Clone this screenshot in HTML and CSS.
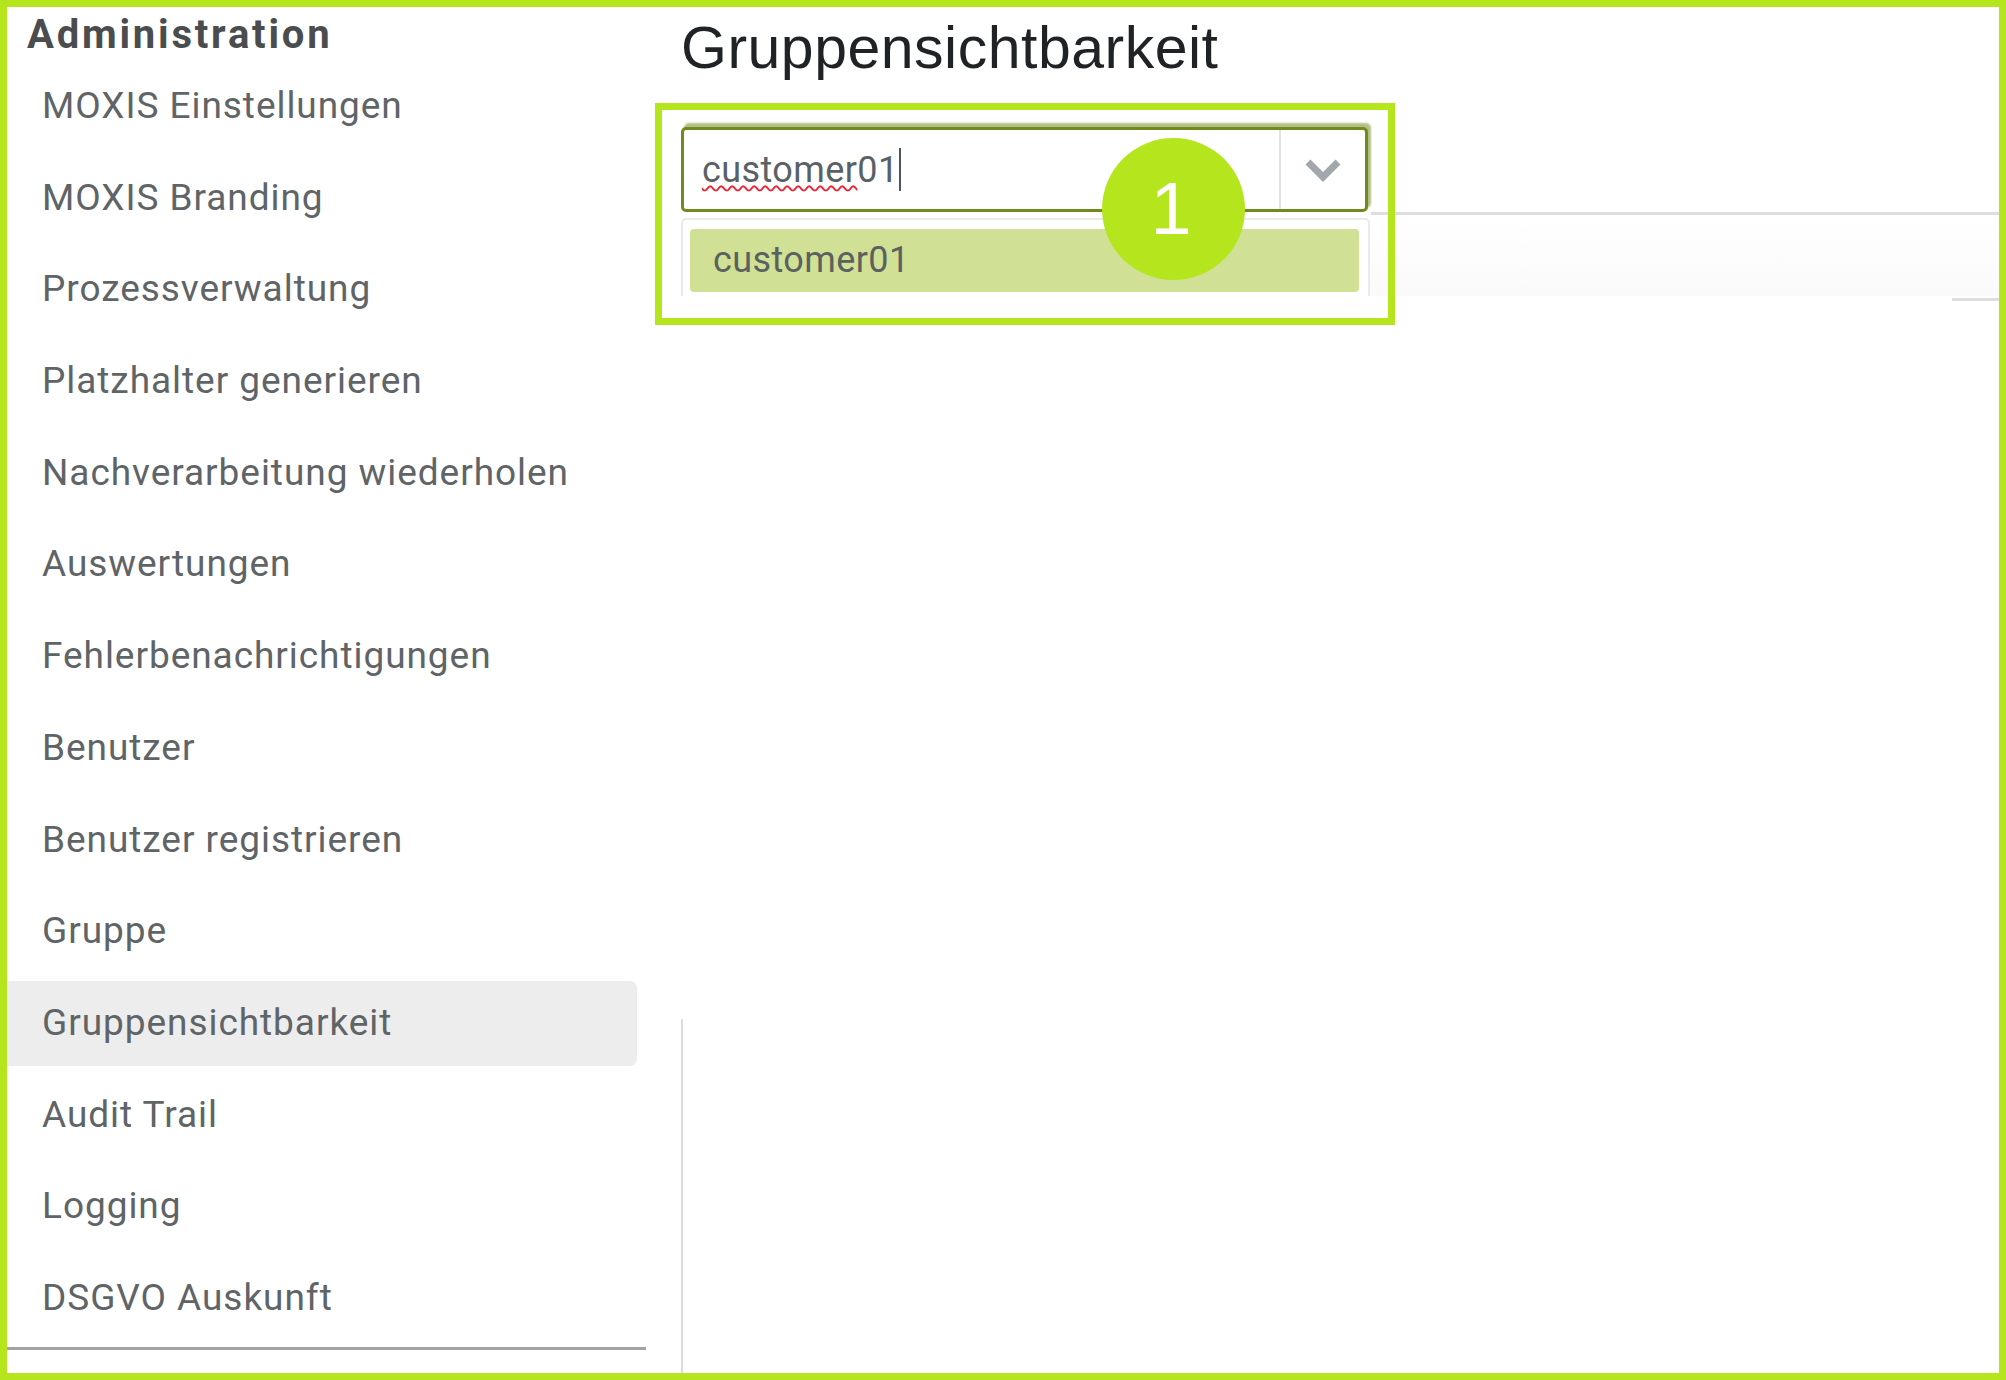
FILE: index.html
```html
<!DOCTYPE html>
<html lang="de">
<head>
  <meta charset="UTF-8">
  <title>Gruppensichtbarkeit</title>
  <link rel="stylesheet" href="styles.css">
</head>
<body>
  <div class="page">

    <!-- Seitenleiste -->
    <aside class="sidebar">
      <h2>Administration</h2>
      <nav class="side-nav">
        <a href="#">MOXIS Einstellungen</a>
        <a href="#">MOXIS Branding</a>
        <a href="#">Prozessverwaltung</a>
        <a href="#">Platzhalter generieren</a>
        <a href="#">Nachverarbeitung wiederholen</a>
        <a href="#">Auswertungen</a>
        <a href="#">Fehlerbenachrichtigungen</a>
        <a href="#">Benutzer</a>
        <a href="#">Benutzer registrieren</a>
        <a href="#">Gruppe</a>
        <a href="#" class="active">Gruppensichtbarkeit</a>
        <a href="#">Audit Trail</a>
        <a href="#">Logging</a>
        <a href="#">DSGVO Auskunft</a>
      </nav>
      <div class="side-rule"></div>
    </aside>

    <!-- Inhalt -->
    <main class="content">
      <h1>Gruppensichtbarkeit</h1>

      <div class="select-row">
        <div class="select-box">
          <div class="select-value"><span class="typo">customer</span>01<span class="caret"></span></div>
          <div class="select-arrow">
            <svg width="36" height="24" viewBox="0 0 36 24">
              <path d="M3 4 L18 19 L33 4" fill="none" stroke="#a2a7ab" stroke-width="7"/>
            </svg>
          </div>
        </div>
        <div class="select-rest"></div>
      </div>

      <div class="tab-body">
        <div class="dropdown">
          <div class="dropdown-item">customer01</div>
        </div>
      </div>
      <div class="tab-end"></div>

      <div class="pane">
        <div class="splitter"></div>
      </div>
    </main>

    <!-- Markierung -->
    <div class="mark-box"></div>
    <div class="mark-badge">1</div>

  </div>
</body>
</html>
```

FILE: styles.css
```css
/* Grundlayout */
html, body {
  margin: 0;
  background: #fff;
}
.page {
  position: relative;
  display: flex;
  box-sizing: border-box;
  width: 2006px;
  height: 1380px;
  border: 7px solid #b5e61d;
  overflow: hidden;
  font-family: Roboto, "Noto Sans", sans-serif;
}

/* Seitenleiste */
.sidebar {
  display: flex;
  flex-direction: column;
  flex: none;
  width: 639px;
}
.sidebar h2 {
  margin: 0;
  height: 57px;
  padding-left: 20px;
  font-size: 40px;
  line-height: 55px;
  font-weight: 700;
  letter-spacing: 2.8px;
  color: #4a4c4e;
}
.side-nav {
  display: flex;
  flex-direction: column;
  gap: 6.7px;
}
.side-nav a {
  display: block;
  width: 630px;
  height: 85px;
  box-sizing: border-box;
  padding-left: 35px;
  font-size: 37px;
  line-height: 84px;
  letter-spacing: 0.95px;
  color: #5f6467;
  text-decoration: none;
}
.side-nav a.active {
  background: #ededed;
  border-radius: 0 7px 7px 0;
}
.side-rule {
  margin-top: 6px;
  border-top: 3px solid #a3a3a3;
}

/* Inhalt */
.content {
  display: flex;
  flex-direction: column;
  flex: 1;
  padding-left: 35px;
}
.content h1 {
  margin: 9px 0 47px;
  font-family: "Liberation Sans", Arial, sans-serif;
  font-size: 59px;
  line-height: 64px;
  font-weight: 400;
  letter-spacing: 0.5px;
  color: #1f2326;
}

/* Auswahlfeld */
.select-row {
  display: flex;
  height: 88px;
}
.select-box {
  display: flex;
  flex: none;
  width: 687px;
  height: 85px;
  box-sizing: border-box;
  border: 3px solid #708a1e;
  border-radius: 5px;
  box-shadow: 3px -4px 2px rgba(112, 138, 30, 0.55);
  background: #fff;
}
.select-value {
  display: flex;
  align-items: center;
  flex: 1;
  padding-left: 18px;
  font-size: 36px;
  letter-spacing: 0.4px;
  color: #5a6166;
}
.typo {
  text-decoration: underline wavy #ee2233;
  text-decoration-thickness: 2px;
  text-underline-offset: 3px;
}
.caret {
  width: 2px;
  height: 43px;
  margin-left: 0;
  background: #4a5560;
}
.select-arrow {
  display: flex;
  align-items: center;
  justify-content: center;
  flex: none;
  width: 84px;
  border-left: 2px solid #e2e2e2;
}
.select-rest {
  flex: 1;
  margin-left: 3px;
  border-bottom: 3px solid #dedede;
}

/* Aufklappliste */
.tab-body {
  height: 78px;
  padding-top: 3px;
  overflow: hidden;
  background: linear-gradient(#fff, #fafafa);
}
.dropdown {
  width: 689px;
  height: 90px;
  box-sizing: border-box;
  padding: 9px 9px 9px 7px;
  border: 2px solid #eaeaea;
  border-radius: 5px;
  background: #fff;
}
.dropdown-item {
  height: 63px;
  padding-left: 23px;
  font-size: 36px;
  line-height: 62px;
  letter-spacing: 0.4px;
  color: #5a6160;
  background: #d0e095;
  border-radius: 4px;
}
.tab-end {
  align-self: flex-end;
  width: 47px;
  margin-top: 2px;
  border-top: 3px solid #dedede;
}

.pane {
  display: flex;
  flex: 1;
  flex-direction: column;
}
.splitter {
  flex: 1;
  margin-top: 718px;
  border-left: 2px solid #dcdcdc;
}

/* Markierung über dem Screenshot */
.mark-box {
  position: absolute;
  left: 648px;
  top: 96px;
  width: 740px;
  height: 222px;
  box-sizing: border-box;
  border: 7px solid #b5e61d;
}
.mark-badge {
  position: absolute;
  left: 1095px;
  top: 131px;
  width: 143px;
  height: 142px;
  padding-right: 5px;
  box-sizing: border-box;
  border-radius: 50%;
  background: #b5e61d;
  color: #fff;
  font-family: "Liberation Sans", Arial, sans-serif;
  font-size: 74px;
  line-height: 142px;
  text-align: center;
}
```
